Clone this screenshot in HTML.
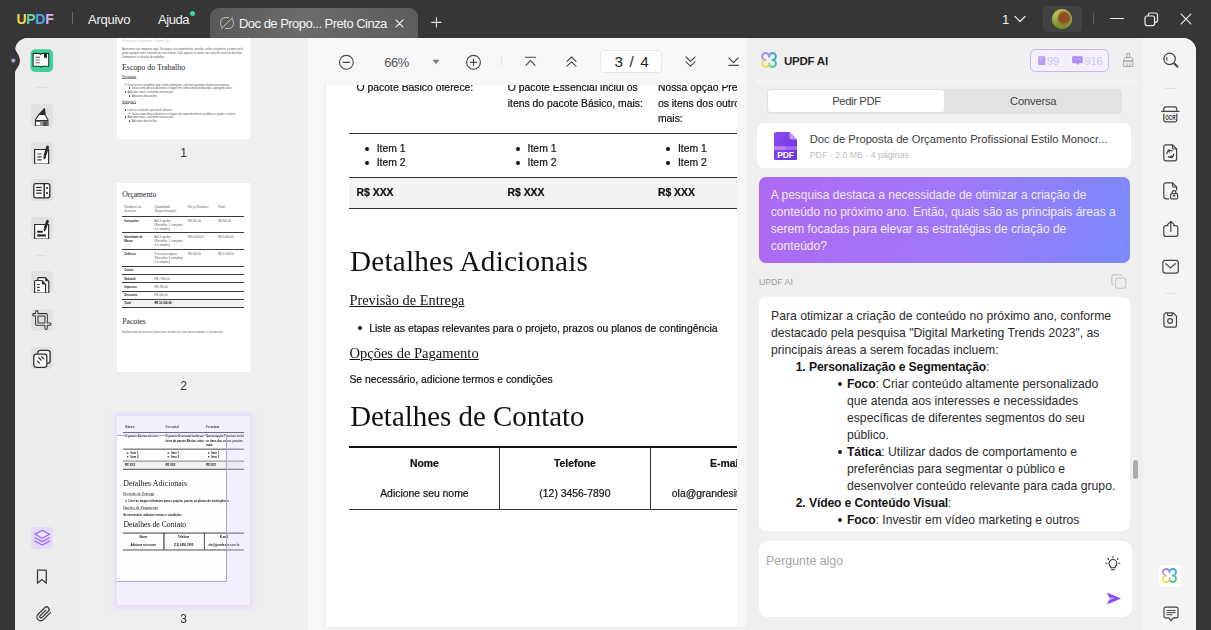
<!DOCTYPE html>
<html lang="pt-BR">
<head>
<meta charset="utf-8">
<title>UPDF</title>
<style>
*{box-sizing:border-box;margin:0;padding:0}
html,body{width:1211px;height:630px;overflow:hidden;background:#373637;font-family:"Liberation Sans",sans-serif;color:#333}
.abs{position:absolute}
#app{position:absolute;left:0;top:0;width:1211px;height:630px;overflow:hidden;background:#373637}
/* title bar */
#titlebar{position:absolute;left:0;top:0;width:1211px;height:38px;color:#fff}
.menu{position:absolute;top:11.700px;font-size:13px;color:#f2f2f2;line-height:16px;white-space:nowrap;letter-spacing:-0.250px}
#tab{position:absolute;left:210px;top:8px;width:208px;height:30px;border-radius:9px 9px 0 0;background:linear-gradient(90deg,#595959 0%,#6b6b6b 45%,#5d5d5d 100%)}
#tab .t{position:absolute;left:29px;top:7.600px;font-size:13px;line-height:16px;color:#f4f4f4;white-space:nowrap;letter-spacing:-0.520px}
/* window panel */
#panel{position:absolute;left:15px;top:38px;width:1181px;height:600px;border-radius:13px 13px 0 0;overflow:hidden;background:#ececed}
#pin{position:absolute;left:1px;top:0;width:1180px;height:600px}
#ltool{position:absolute;left:0;top:0;width:51px;height:600px;background:#ececed}
#thumbs{position:absolute;left:51px;top:0;width:242px;height:600px;background:linear-gradient(90deg,#ececed 0,#efeff0 8px)}
#main{position:absolute;left:293px;top:0;width:438px;height:600px;background:#f7f7f9;overflow:hidden}
#ai{position:absolute;left:731px;top:0;width:396px;height:600px;background:#efeff0}
#rtool{position:absolute;left:1127px;top:0;width:53px;height:600px;background:#f4f4f5}
.ibox{position:absolute;left:15px;width:22px;height:22px;border-radius:4px;background:#e1e1e2}
.ibox svg{position:absolute;left:0;top:0}
.tsep{position:absolute;height:1px;background:#dcdcdd}
/* thumbnails */
.thumb{position:absolute;left:50px;width:133px;background:#fff;overflow:hidden}
.tlabel{position:absolute;left:50px;width:133px;text-align:center;font-size:12px;line-height:14px;color:#333}
/* toolbar */
#tbar{position:absolute;left:0;top:0;width:438px;height:47px;background:#f7f7f9;z-index:5}
/* pdf page */
#page{position:absolute;left:17px;top:-27px;width:411px;height:615.800px;background:#fff;overflow:hidden;will-change:transform}
#pshadow{position:absolute;left:17px;top:-27px;width:440px;height:615.800px;box-shadow:0 0 4px 0 rgba(0,0,0,.10)}

.pg3{position:absolute;left:.4px;top:0;width:494px;height:706px;background:#fff;font-size:10.400px;color:#151515;-webkit-text-stroke:.22px #151515}
.pg3 .h1,.pg3 .h2{-webkit-text-stroke:0}
.pg3 .ln{position:absolute;background:#2f2f2f;height:1px}
.pg3 .t{position:absolute;white-space:nowrap;line-height:12px;margin-top:1.100px}
.pg3 .t.b{font-weight:bold;color:#111}
.pg3 .t.c{text-align:center}
.pg3 .t.sf{font-family:"Liberation Serif",serif;font-size:12.500px;line-height:14px}
.pg3 .bl{position:absolute;width:4.400px;height:4.400px;border-radius:50%;background:#111;margin-top:.4px}
.pg3 .h1{position:absolute;margin-top:-0.600px;font-family:"Liberation Serif",serif;font-size:29.200px;line-height:30px;white-space:nowrap;color:#111}
.pg3 .h2{position:absolute;font-family:"Liberation Serif",serif;font-size:14.400px;line-height:16px;white-space:nowrap;text-decoration:underline;text-decoration-thickness:1px;text-underline-offset:.6px;color:#111}
.t3wrap{position:absolute;left:0;top:0;width:494px;height:706px;transform:scale(0.2682);transform-origin:0 0}
.t3wrap .pg3{background:transparent;left:0}
.t3wrap .ln{min-height:3.700px;min-width:3.700px;background:#262626}
.t3wrap .pg3{-webkit-text-stroke:0}
.t3wrap .t{font-weight:bold}
.t3wrap .bl{transform:scale(1.3)}
.tt{position:absolute;white-space:nowrap;font-size:2.850px;line-height:4px;color:#555}
.tt.b{font-weight:bold;color:#222}
.ts{position:absolute;white-space:nowrap;font-family:"Liberation Serif",serif;color:#222}
.tb{position:absolute;width:1.500px;height:1.500px;background:#333;border-radius:50%}
.tl{position:absolute;left:5.400px;width:121.300px;height:.9px;background:#3a3a3a}
.ans{position:absolute;margin-top:.45px;white-space:nowrap;font-size:12.200px;line-height:17.050px;color:#2b2b2b}
.ans b{color:#161616;letter-spacing:-0.160px}
.bdot{position:absolute;width:4.200px;height:4.200px;border-radius:50%;background:#222}
.ans.bu{font-size:12px}
/* AI */
.card{position:absolute;background:#fff;border-radius:7px}
</style>
</head>
<body>
<svg width="0" height="0" style="position:absolute">
  <defs>
    <filter id="lgb" x="-20%" y="-20%" width="140%" height="140%"><feGaussianBlur stdDeviation="1.600"/></filter>
    <mask id="lgm" maskUnits="userSpaceOnUse" x="0" y="0" width="17" height="17"><path d="M8.500 5.300A3.250 3.250 0 1 0 5.300 8.500 3.250 3.250 0 1 0 8.500 11.700 3.250 3.250 0 1 0 11.700 8.500 3.250 3.250 0 1 0 8.500 5.300z" fill="none" stroke="#fff" stroke-width="1.900" stroke-linejoin="round"/></mask>
    <symbol id="ailogo" viewBox="0 0 17 17">
      <g mask="url(#lgm)"><g filter="url(#lgb)"><rect x="-3" y="-3" width="11.500" height="11.500" fill="#a987f2"/><rect x="8.500" y="-3" width="11.500" height="11.500" fill="#3ea6dc"/><rect x="8.500" y="8.500" width="11.500" height="11.500" fill="#3fc98e"/><rect x="-3" y="8.500" width="11.500" height="11.500" fill="#f1e13c"/></g></g>
    </symbol>
    <linearGradient id="pdfg" x1="0" y1="0" x2="1" y2="1"><stop offset="0" stop-color="#8c4bf0"/><stop offset="1" stop-color="#6a35dd"/></linearGradient>
  </defs>
</svg>
<div id="app">
  <div id="titlebar">
    <div class="abs" style="left:16.5px;top:9px;font-size:14px;line-height:20px;font-weight:bold;letter-spacing:-0.3px;white-space:nowrap"><span style="color:#f3d84a">U</span><span style="color:#5cd6a2">P</span><span style="color:#4ba6e4">D</span><span style="color:#cfaef6">F</span></div>
    <div class="abs" style="left:72px;top:12px;width:1px;height:12px;background:#6a6a6a"></div>
    <div class="menu" style="left:88px">Arquivo</div>
    <div class="menu" style="left:158px;letter-spacing:-0.450px">Ajuda</div>
    <div class="abs" style="left:190px;top:10.500px;width:5px;height:5px;border-radius:50%;background:#3fd6a5"></div>
    <div id="tab">
      <svg class="abs" style="left:9px;top:8px" width="16" height="14" viewBox="0 0 16 14" fill="none" stroke="#c2c2c2" stroke-width="1" stroke-linecap="round"><path d="M9.5 1.6H6.2C3.6 1.6 1.6 3.6 1.6 6.2v1.6c0 1.5.7 2.8 1.7 3.6"/><path d="M6.5 12.4h3.3c2.6 0 4.6-2 4.6-4.6V6.2c0-1.5-.7-2.8-1.7-3.6"/><path d="M2.2 12.6L13.8 1.4"/></svg>
      <div class="t">Doc de Propo... Preto Cinza</div>
      <svg class="abs" style="left:185px;top:10.500px" width="9" height="9" viewBox="0 0 10 10" stroke="#f0f0f0" stroke-width="1.25" stroke-linecap="round"><path d="M1 1l8 8M9 1l-8 8"/></svg>
    </div>
    <svg class="abs" style="left:430.800px;top:16.800px" width="10.800" height="10.800" viewBox="0 0 12 12" stroke="#e8e8e8" stroke-width="1.2" stroke-linecap="round"><path d="M6 .8v10.4M.8 6h10.4"/></svg>
    <div class="menu" style="left:1002px">1</div>
    <svg class="abs" style="left:1014px;top:15px" width="12" height="8" viewBox="0 0 12 8" fill="none" stroke="#e8e8e8" stroke-width="1.2" stroke-linecap="round" stroke-linejoin="round"><path d="M1 1.5l5 5 5-5"/></svg>
    <div class="abs" style="left:1043px;top:6px;width:39px;height:26px;border-radius:4px;background:#424242"></div>
    <div class="abs" style="left:1052px;top:9px;width:20px;height:20px;border-radius:50%;overflow:hidden;background:#9aa845">
      <div class="abs" style="left:0;top:0;width:20px;height:20px;background:radial-gradient(circle at 12px 9px,#8a4a22 0,#8f5227 5px,rgba(143,82,39,0) 7.5px),radial-gradient(circle at 5px 6px,#c2bf5a 0,rgba(190,190,90,0) 7px),linear-gradient(180deg,#b5b255 0,#8fa03c 60%,#6d8a2c 100%)"></div>
    </div>
    <div class="abs" style="left:1093px;top:13px;width:1px;height:11px;background:#5a5a5a"></div>
    <div class="abs" style="left:1110px;top:18px;width:14px;height:1.3px;background:#ececec"></div>
    <svg class="abs" style="left:1144px;top:12px" width="15" height="15" viewBox="0 0 15 15" fill="none" stroke="#ececec" stroke-width="1.2"><rect x="1" y="4" width="9.6" height="9.6" rx="2"/><path d="M4.2 4V3c0-1.100.9-2 2-2h5.300c1.100 0 2 .9 2 2v5.300c0 1.100-.9 2-2 2h-.9"/></svg>
    <svg class="abs" style="left:1179.500px;top:13.300px" width="12" height="12" viewBox="0 0 13 13" stroke="#ececec" stroke-width="1.3" stroke-linecap="round"><path d="M1.300 1.300l10.400 10.400M11.700 1.300L1.300 11.700"/></svg>
  </div>
  <svg class="abs" style="left:0;top:48px;z-index:9" width="24" height="25" viewBox="0 0 24 25"><path d="M15 0C15 3.600 19.900 6.200 19.900 12.500S15 21.400 15 25H0V0z" fill="#373637"/><circle cx="13.300" cy="12.600" r="2.100" fill="#a99cd8"/></svg>
  <div id="panel"><div id="pin">
    <div id="ltool">
      <div class="ibox" style="left:14px;top:11px;width:24px;height:24px;background:none">
        <svg width="24" height="24" viewBox="0 0 24 24"><rect x=".5" y=".3" width="22.600" height="22.600" rx="4.600" fill="#40d09a"/><g transform="translate(-.1 .1)"><path d="M3.200 4.300h5.200c1.200 0 2 .4 2.400 1 .4-.6 1.200-1 2.400-1h5.600v12.800h-5.600c-1.200 0-2 .3-2.400.9-.4-.6-1.200-.9-2.400-.9H3.200z" fill="#fff" stroke="#14392b" stroke-width="1.100" stroke-linejoin="round"/><path d="M14.200 4.500h2.700v4.800l-1.350-1.100-1.350 1.100z" fill="#101010"/><path d="M5.600 8.200h4.400" stroke="#3d3d3d" stroke-width="1.100"/><path d="M5.600 10.900h4.400" stroke="#5f7a6a" stroke-width="1.100"/><path d="M5.600 13.700h4.400" stroke="#8a4a5a" stroke-width="1.100"/></g></svg>
      </div>
      <div class="tsep" style="left:21px;top:49px;width:10px"></div>
      <div class="ibox" style="top:66px">
        <svg width="22" height="22" viewBox="0 0 22 22"><path d="M13.500 4.600L7.600 10.900 4.400 15.800v6.200h12.500v-6.200l-2.700-4.900z" fill="#fff" stroke="#2e2e2e" stroke-width="1.100" stroke-linejoin="round"/><path d="M13.700 4.400L7.400 11h6.900z" fill="#2b2b2b"/><rect x="4.400" y="16" width="12.500" height="1.700" fill="#2e2e2e"/><rect x="9" y="17.700" width="7.400" height="4.300" fill="#9a9a9a"/><rect x="12" y="17.700" width="4.400" height="4.300" fill="#555"/></svg>
      </div>
      <div class="ibox" style="top:104px">
        <svg width="22" height="22" viewBox="0 0 22 22"><path d="M3.600 7.500h14v14.500h-14z" fill="#fff" stroke="#2e2e2e" stroke-width="1.200"/><path d="M6.300 12h4.300M6.300 14.900h4.300M6.300 17.800h4.300" stroke="#3a3a3a" stroke-width="1.200"/><path d="M16.600 5l-2.700 8.500" stroke="#2a2a2a" stroke-width="2.700" stroke-linecap="round"/><path d="M12.300 14.200l3.200 1-2.700 2.600z" fill="#2a2a2a"/></svg>
      </div>
      <div class="ibox" style="top:141px">
        <svg width="22" height="22" viewBox="0 0 22 22"><rect x="2.800" y="4.600" width="16" height="14.200" rx="2" fill="#fff" stroke="#2e2e2e" stroke-width="1.300"/><path d="M13.200 4.600v14.200" stroke="#2e2e2e" stroke-width="1.500"/><path d="M5.200 8.400h5.600M5.200 11.300h5.600M5.200 14.100h5.600" stroke="#333" stroke-width="1.300"/><circle cx="16" cy="9" r="1.050" fill="#333"/><circle cx="16" cy="14.100" r="1.050" fill="#333"/></svg>
      </div>
      <div class="ibox" style="top:179px">
        <svg width="22" height="22" viewBox="0 0 22 22"><path d="M3.600 7.500h14v14.500h-14z" fill="#fff" stroke="#2e2e2e" stroke-width="1.200"/><rect x="6.200" y="13.700" width="5.600" height="2" fill="#222"/><rect x="6.200" y="17.400" width="8.800" height="2.100" fill="#222"/><path d="M16.500 4.200l-2.200 6.300" stroke="#2a2a2a" stroke-width="2.700" stroke-linecap="round"/><path d="M12.600 11.300l3.100 1-2.700 2.500z" fill="#2a2a2a"/></svg>
      </div>
      <div class="tsep" style="left:21px;top:217px;width:9px"></div>
      <div class="ibox" style="top:233px">
        <svg width="22" height="22" viewBox="0 0 22 22"><path d="M6.800 9V7.600c0-.6.400-1 1-1h6.400l3.600 3.700V22h-3" fill="#fff" stroke="#2e2e2e" stroke-width="1.200" stroke-linejoin="round"/><path d="M14.200 6.600v3.700h3.600z" fill="#2a2a2a"/><path d="M3.600 22V10.500c0-.6.400-1 1-1h6.300l3.700 3.800V22z" fill="#fff" stroke="#2e2e2e" stroke-width="1.200" stroke-linejoin="round"/><path d="M10.900 9.500v3.800h3.700z" fill="#2a2a2a"/><path d="M6 13.500h2.700M6 16.400h2.700M6 19.300h2.700" stroke="#333" stroke-width="1.200"/></svg>
      </div>
      <div class="ibox" style="top:271px">
        <svg width="22" height="22" viewBox="0 0 22 22" fill="none" stroke-linecap="round" stroke-linejoin="round"><path d="M2.800 5.800h12.300v13.400" stroke="#333" stroke-width="3.400"/><path d="M5.800 2.800v12.300h13" stroke="#333" stroke-width="3.400"/><path d="M2.800 5.800h12.300v13.400" stroke="#f4f4f4" stroke-width="1.300"/><path d="M5.800 2.800v12.300h13" stroke="#f4f4f4" stroke-width="1.300"/></svg>
      </div>
      <div class="ibox" style="top:308.500px">
        <svg width="22" height="22" viewBox="0 0 22 22"><rect x="6.800" y="3.300" width="12.300" height="13" rx="2.600" fill="#f6f6f6" stroke="#333" stroke-width="1.300"/><rect x="2.800" y="7.100" width="13" height="13.300" rx="2.600" fill="#fff" stroke="#333" stroke-width="1.300"/><path d="M7.600 10.600l2.400 2.400M10.600 9.600l2.300 2.300M6.500 14.100l2 2" stroke="#333" stroke-width="1.300" stroke-linecap="round"/></svg>
      </div>
      <div class="ibox" style="left:14.500px;top:489px;width:22.500px;height:21.500px;background:#e4dafb">
        <svg width="22.5" height="21.500" viewBox="0 0 22.5 21.500" fill="none" stroke="#9a6bf2" stroke-width="1.250" stroke-linejoin="round" stroke-linecap="round"><path d="M11.200 3.400l7.300 3.900-7.300 3.900-7.300-3.900z" fill="#ede4ff"/><path d="M3.900 10.700l7.300 3.900 7.300-3.900"/><path d="M3.900 14.100l7.300 3.900 7.300-3.900"/></svg>
      </div>
      <svg class="abs" style="left:20px;top:530.500px" width="12" height="16" viewBox="0 0 12 16" fill="none" stroke="#3d3d3d" stroke-width="1.300" stroke-linejoin="round"><path d="M1.500 1.200h8.800v13L5.900 10.600 1.500 14.200z"/></svg>
      <svg class="abs" style="left:18.500px;top:567.200px" width="18" height="18" viewBox="0 0 18 18" fill="none" stroke="#3d3d3d" stroke-width="1.300" stroke-linecap="round"><path d="M15.400 7.600l-7 7c-1.500 1.500-3.900 1.500-5.300 0-1.500-1.500-1.500-3.800 0-5.300l6.600-6.600c1-1 2.600-1 3.600 0s1 2.600 0 3.600l-6.300 6.300c-.5.500-1.300.5-1.800 0s-.5-1.300 0-1.800l5.700-5.700"/></svg>
    </div>
    <div id="thumbs">
      <div class="abs" style="right:0;top:0;width:1.500px;height:600px;background:#f7f7f9"></div>
      <div class="thumb" style="top:0;height:100.500px">
        <div class="tt" style="left:5px;top:1px;color:#c4c4c4">Proposta de Orçamento · Grande Site</div>
        <div class="tt" style="left:5px;top:9.100px">Apresente sua empresa aqui. Destaque sua experiência, missão, visão e trajetória e como você</div>
        <div class="tt" style="left:5px;top:12.900px">pode agregar valor e beneficiar seu cliente. Vale apostar e contar um caso de sucesso do leitor.</div>
        <div class="tt" style="left:5px;top:17.100px">Demonstre a solução de trabalho.</div>
        <div class="ts" style="left:5px;top:24.800px;font-size:7.900px;line-height:10px">Escopo do Trabalho</div>
        <div class="ts" style="left:5px;top:37.200px;font-size:3.900px;line-height:5px;text-decoration:underline;text-decoration-thickness:.45px;text-underline-offset:.3px;text-decoration-color:#8a8a8a">Premium</div>
        <div class="tb" style="left:7.500px;top:45.600px"></div><div class="tt" style="left:10.500px;top:44.500px">Descreva os produtos que serão entregues; adicione quantas forem necessárias</div>
        <div class="tb" style="left:11.500px;top:49.400px"></div><div class="tt" style="left:14.700px;top:48.300px">Inclua uma descrição breve e foque em como serão produzidos, agregam valor</div>
        <div class="tb" style="left:7.500px;top:53.300px"></div><div class="tt" style="left:10.500px;top:52.200px">Adicione mais, conforme necessário</div>
        <div class="tb" style="left:11.500px;top:57.100px"></div><div class="tt" style="left:14.700px;top:56px">Adicione descrições</div>
        <div class="ts" style="left:5px;top:62.200px;font-size:3.900px;line-height:5px;text-decoration:underline;text-decoration-thickness:.45px;text-underline-offset:.3px;text-decoration-color:#8a8a8a">Soluções</div>
        <div class="tb" style="left:7.500px;top:71px"></div><div class="tt" style="left:10.500px;top:69.900px">Liste as soluções que você oferece</div>
        <div class="tb" style="left:11.500px;top:74.700px"></div><div class="tt" style="left:14.700px;top:73.600px">Inclua uma descrição breve e foque em como beneficia o público e ajuda o cliente</div>
        <div class="tb" style="left:7.500px;top:78.400px"></div><div class="tt" style="left:10.500px;top:77.300px">Adicione mais, conforme necessário</div>
        <div class="tb" style="left:11.500px;top:82.100px"></div><div class="tt" style="left:14.700px;top:81px">Adicione descrições</div>
      </div>
      <div class="tlabel" style="top:107.500px">1</div>
      <div class="thumb" style="top:145px;height:188.500px">
        <div class="ts" style="left:5.200px;top:7.200px;font-size:7.700px;line-height:10px">Orçamento</div>
        <div class="ts" style="left:7.200px;top:21.700px;font-size:3.500px;line-height:4.400px;color:#555">Produtos ou<br>Serviços</div>
        <div class="ts" style="left:37.500px;top:21.700px;font-size:3.500px;line-height:4.400px;color:#555">Quantidade<br>(Especificação)</div>
        <div class="ts" style="left:71px;top:21.700px;font-size:3.500px;line-height:4.400px;color:#555">Preço Unitário</div>
        <div class="ts" style="left:101px;top:21.700px;font-size:3.500px;line-height:4.400px;color:#555">Total</div>
        <div class="tl" style="top:32.900px"></div>
        <div class="tt b" style="left:7.200px;top:35.700px">Instruções</div><div class="tt" style="left:37.500px;top:35.700px;line-height:4.100px">Até 3 opções<br>(Revisões: 1 completa<br>e 1 simples)</div><div class="tt" style="left:71px;top:35.700px">R$ 300,00</div><div class="tt" style="left:101px;top:35.700px">R$ 300,00</div>
        <div class="tl" style="top:49.400px"></div>
        <div class="tt b" style="left:7.200px;top:52.200px;line-height:4.100px">Identidade de<br>Marca</div><div class="tt" style="left:37.500px;top:52.200px;line-height:4.100px">Até 3 opções<br>(Revisões: 1 completa<br>e 2 simples)</div><div class="tt" style="left:71px;top:52.200px">R$ 6.000,00</div><div class="tt" style="left:101px;top:52.200px">R$ 6.000,00</div>
        <div class="tl" style="top:65.900px"></div>
        <div class="tt b" style="left:7.200px;top:68.600px">Gráficos</div><div class="tt" style="left:37.500px;top:68.600px;line-height:4.100px">3 recursos digitais<br>(Revisões: 1 completa<br>e 1 simples)</div><div class="tt" style="left:71px;top:68.600px">R$ 500,00</div><div class="tt" style="left:101px;top:68.600px">R$ 1.500,00</div>
        <div class="tl" style="top:82.800px"></div>
        <div class="tt b" style="left:7.200px;top:85.100px">Outros</div>
        <div class="tl" style="top:91px"></div>
        <div class="tt b" style="left:7.200px;top:94px">Subtotal</div><div class="tt" style="left:37.500px;top:94px">R$ 7.800,00</div>
        <div class="tl" style="top:99.300px"></div>
        <div class="tt b" style="left:7.200px;top:102.200px">Impostos</div><div class="tt" style="left:37.500px;top:102.200px">R$ 780,00</div>
        <div class="tl" style="top:107.500px"></div>
        <div class="tt b" style="left:7.200px;top:110.200px">Desconto</div><div class="tt" style="left:37.500px;top:110.200px">R$ 500,00</div>
        <div class="abs" style="left:5.400px;top:116.300px;width:121.300px;height:8.300px;background:#f1f1f1"></div>
        <div class="tl" style="top:115.900px"></div>
        <div class="tt b" style="left:7.200px;top:118.400px">Total</div><div class="tt b" style="left:37.500px;top:118.400px;color:#000">R$ 10.100,00</div>
        <div class="tl" style="top:124.200px"></div>
        <div class="ts" style="left:5.200px;top:133.800px;font-size:7.700px;line-height:10px">Pacotes</div>
        <div class="tt" style="left:5.200px;top:146.800px;color:#666">Explore nossos pacotes feitos para atender às suas necessidades e orçamento.</div>
      </div>
      <div class="tlabel" style="top:341px">2</div>
      <div class="abs" style="left:50px;top:378px;width:133px;height:188.500px;background:#e9e1fb;box-shadow:0 0 4px 3px #e5dcf9"></div>
      <div class="thumb" style="top:378px;height:188.500px;background:#fdfcff">
        <div class="t3wrap">
<div class="pg3">
<div class="t sf" style="left:30.500px;top:34px">Básico</div><div class="t sf" style="left:181.300px;top:34px">Essencial</div><div class="t sf" style="left:331.500px;top:34px">Premium</div>
<div class="ln" style="left:22.300px;top:59.500px;width:452.200px;height:2px"></div>
<div class="t" style="left:30.200px;top:70px">O pacote Básico oferece:</div>
<div class="t" style="left:181.300px;top:70px">O pacote Essencial inclui os</div><div class="t" style="left:181.300px;top:85.500px">itens do pacote Básico, mais:</div>
<div class="t" style="left:331.500px;top:70px">Nossa opção Premium inclui</div><div class="t" style="left:331.500px;top:85.500px">os itens dos outros pacotes,</div><div class="t" style="left:331.500px;top:101px">mais:</div>
<div class="ln" style="left:22.300px;top:121.700px;width:452.200px"></div>
<div class="bl" style="left:38.400px;top:135.500px"></div><div class="t" style="left:50.300px;top:131.200px">Item 1</div>
<div class="bl" style="left:38.400px;top:149.500px"></div><div class="t" style="left:50.300px;top:145.200px">Item 2</div>
<div class="bl" style="left:189.200px;top:135.500px"></div><div class="t" style="left:201.200px;top:131.200px">Item 1</div>
<div class="bl" style="left:189.200px;top:149.500px"></div><div class="t" style="left:201.200px;top:145.200px">Item 2</div>
<div class="bl" style="left:339.700px;top:135.500px"></div><div class="t" style="left:351.500px;top:131.200px">Item 1</div>
<div class="bl" style="left:339.700px;top:149.500px"></div><div class="t" style="left:351.500px;top:145.200px">Item 2</div>
<div class="abs" style="left:23px;top:166.200px;width:452.200px;height:31px;background:#f2f2f2"></div>
<div class="ln" style="left:22.300px;top:165.700px;width:452.200px"></div>
<div class="t b" style="left:30.200px;top:174.500px">R$ XXX</div><div class="t b" style="left:181.100px;top:174.500px">R$ XXX</div><div class="t b" style="left:331.500px;top:174.500px">R$ XXX</div>
<div class="ln" style="left:22.300px;top:196.800px;width:452.200px"></div>
<div class="h1" style="left:23.600px;top:235.700px;letter-spacing:0.2px">Detalhes Adicionais</div>
<div class="h2" style="left:23px;top:280.800px">Previsão de Entrega</div>
<div class="bl" style="left:31.600px;top:314.300px;width:4.200px;height:4.200px"></div><div class="t" style="left:42.800px;top:310.600px">Liste as etapas relevantes para o projeto, prazos ou planos de contingência</div>
<div class="h2" style="left:23px;top:334.100px;font-size:14.550px">Opções de Pagamento</div>
<div class="t" style="left:23px;top:362.400px">Se necessário, adicione termos e condições</div>
<div class="h1" style="left:23.800px;top:390.800px;font-size:28.900px">Detalhes de Contato</div>
<div class="ln" style="left:22.300px;top:434.700px;width:452.200px;height:2px;background:#111"></div>
<div class="ln" style="left:173px;top:436px;width:1px;height:62px"></div><div class="ln" style="left:323.500px;top:436px;width:1px;height:62px"></div>
<div class="t b c" style="left:23px;width:150px;top:445.900px">Nome</div><div class="t b c" style="left:173.500px;width:150px;top:445.900px">Telefone</div><div class="t b c" style="left:324px;width:150.500px;top:445.900px">E-mail</div>
<div class="t c" style="left:23px;width:150px;top:476.200px">Adicione seu nome</div><div class="t c" style="left:173.500px;width:150px;top:476.200px">(12) 3456-7890</div><div class="t c" style="left:324px;width:150.500px;top:476.200px">ola@grandesite.com.br</div>
<div class="ln" style="left:22.300px;top:497.500px;width:452.200px"></div>
</div>
        </div>
        <div class="abs" style="left:0;top:0;width:133px;height:19.500px;background:rgba(217,200,251,.24)"></div>
        <div class="abs" style="left:109.300px;top:19.500px;width:24px;height:146px;background:rgba(217,200,251,.24)"></div>
        <div class="abs" style="left:0;top:165.500px;width:133px;height:23.500px;background:rgba(217,200,251,.24)"></div>
        <div class="abs" style="left:-1px;top:19px;width:110.800px;height:147px;border:1px solid #afa3e4"></div>
      </div>
      <div class="tlabel" style="top:573.500px">3</div>
    </div>
    <div id="main">
      <div id="pshadow"></div><div id="page"><div class="pg3">
<div class="t sf" style="left:30.500px;top:34px">Básico</div><div class="t sf" style="left:181.300px;top:34px">Essencial</div><div class="t sf" style="left:331.500px;top:34px">Premium</div>
<div class="ln" style="left:22.300px;top:59.500px;width:452.200px;height:2px"></div>
<div class="t" style="left:30.200px;top:70px">O pacote Básico oferece:</div>
<div class="t" style="left:181.300px;top:70px">O pacote Essencial inclui os</div><div class="t" style="left:181.300px;top:85.500px">itens do pacote Básico, mais:</div>
<div class="t" style="left:331.500px;top:70px">Nossa opção Premium inclui</div><div class="t" style="left:331.500px;top:85.500px">os itens dos outros pacotes,</div><div class="t" style="left:331.500px;top:101px">mais:</div>
<div class="ln" style="left:22.300px;top:121.700px;width:452.200px"></div>
<div class="bl" style="left:38.400px;top:135.500px"></div><div class="t" style="left:50.300px;top:131.200px">Item 1</div>
<div class="bl" style="left:38.400px;top:149.500px"></div><div class="t" style="left:50.300px;top:145.200px">Item 2</div>
<div class="bl" style="left:189.200px;top:135.500px"></div><div class="t" style="left:201.200px;top:131.200px">Item 1</div>
<div class="bl" style="left:189.200px;top:149.500px"></div><div class="t" style="left:201.200px;top:145.200px">Item 2</div>
<div class="bl" style="left:339.700px;top:135.500px"></div><div class="t" style="left:351.500px;top:131.200px">Item 1</div>
<div class="bl" style="left:339.700px;top:149.500px"></div><div class="t" style="left:351.500px;top:145.200px">Item 2</div>
<div class="abs" style="left:23px;top:166.200px;width:452.200px;height:31px;background:#f2f2f2"></div>
<div class="ln" style="left:22.300px;top:165.700px;width:452.200px"></div>
<div class="t b" style="left:30.200px;top:174.500px">R$ XXX</div><div class="t b" style="left:181.100px;top:174.500px">R$ XXX</div><div class="t b" style="left:331.500px;top:174.500px">R$ XXX</div>
<div class="ln" style="left:22.300px;top:196.800px;width:452.200px"></div>
<div class="h1" style="left:23.600px;top:235.700px;letter-spacing:0.2px">Detalhes Adicionais</div>
<div class="h2" style="left:23px;top:280.800px">Previsão de Entrega</div>
<div class="bl" style="left:31.600px;top:314.300px;width:4.200px;height:4.200px"></div><div class="t" style="left:42.800px;top:310.600px">Liste as etapas relevantes para o projeto, prazos ou planos de contingência</div>
<div class="h2" style="left:23px;top:334.100px;font-size:14.550px">Opções de Pagamento</div>
<div class="t" style="left:23px;top:362.400px">Se necessário, adicione termos e condições</div>
<div class="h1" style="left:23.800px;top:390.800px;font-size:28.900px">Detalhes de Contato</div>
<div class="ln" style="left:22.300px;top:434.700px;width:452.200px;height:2px;background:#111"></div>
<div class="ln" style="left:173px;top:436px;width:1px;height:62px"></div><div class="ln" style="left:323.500px;top:436px;width:1px;height:62px"></div>
<div class="t b c" style="left:23px;width:150px;top:445.900px">Nome</div><div class="t b c" style="left:173.500px;width:150px;top:445.900px">Telefone</div><div class="t b c" style="left:324px;width:150.500px;top:445.900px">E-mail</div>
<div class="t c" style="left:23px;width:150px;top:476.200px">Adicione seu nome</div><div class="t c" style="left:173.500px;width:150px;top:476.200px">(12) 3456-7890</div><div class="t c" style="left:324px;width:150.500px;top:476.200px">ola@grandesite.com.br</div>
<div class="ln" style="left:22.300px;top:497.500px;width:452.200px"></div>
</div>
</div>
      <div id="tbar">
        <svg class="abs" style="left:29px;top:16px" width="17" height="17" viewBox="0 0 17 17" fill="none" stroke="#4a4a4a" stroke-width="1.150" stroke-linecap="round"><circle cx="8.400" cy="8.300" r="6.900"/><path d="M5.200 8.300h6.400"/></svg>
        <div class="abs" style="left:75.300px;top:16.500px;font-size:13px;line-height:15px;letter-spacing:-0.550px;color:#555;white-space:nowrap">66%</div>
        <svg class="abs" style="left:122.500px;top:21px" width="8" height="6" viewBox="0 0 8 6"><path d="M.6.700h6.800L4 5.300z" fill="#7a7a7a"/></svg>
        <svg class="abs" style="left:155.500px;top:15.500px" width="17" height="17" viewBox="0 0 17 17" fill="none" stroke="#4a4a4a" stroke-width="1.150" stroke-linecap="round"><circle cx="8.500" cy="8.300" r="6.900"/><path d="M5.300 8.300h6.400M8.500 5.100v6.400"/></svg>
        <div class="abs" style="left:192px;top:18px;width:1px;height:10px;background:#e4e4e6"></div>
        <svg class="abs" style="left:215px;top:17px" width="13" height="13" viewBox="0 0 13 13" fill="none" stroke="#4a4a4a" stroke-width="1.150" stroke-linecap="round" stroke-linejoin="round"><path d="M1.400 2.200h10.200"/><path d="M2 10.400l4.500-4.700 4.500 4.700"/></svg>
        <svg class="abs" style="left:256px;top:17px" width="13" height="13" viewBox="0 0 13 13" fill="none" stroke="#4a4a4a" stroke-width="1.150" stroke-linecap="round" stroke-linejoin="round"><path d="M2 6.400l4.500-4.400 4.500 4.400"/><path d="M2 11.200l4.500-4.400 4.500 4.400"/></svg>
        <div class="abs" style="left:291.200px;top:12.200px;width:62px;height:23px;border:1px solid #e6e6e8;border-radius:4px;background:#fff"></div>
        <div class="abs" style="left:305.500px;top:15px;font-size:15.300px;line-height:17px;color:#1e1e1e;white-space:nowrap;word-spacing:2.200px">3 / 4</div>
        <svg class="abs" style="left:375px;top:17px" width="13" height="13" viewBox="0 0 13 13" fill="none" stroke="#4a4a4a" stroke-width="1.150" stroke-linecap="round" stroke-linejoin="round"><path d="M2 2l4.500 4.400L11 2"/><path d="M2 6.800l4.500 4.400L11 6.800"/></svg>
        <svg class="abs" style="left:417.500px;top:17px" width="13" height="13" viewBox="0 0 13 13" fill="none" stroke="#4a4a4a" stroke-width="1.150" stroke-linecap="round" stroke-linejoin="round"><path d="M2 3l4.500 4.600L11 3"/><path d="M1.800 10.300h9.600"/></svg>
      </div>
    </div>
    <div id="ai">
      <svg class="abs" style="left:12.600px;top:13.300px" width="18" height="18" viewBox="0 0 17 17"><use href="#ailogo"/></svg>
      <div class="abs" style="left:37px;top:16px;font-size:11.500px;line-height:14px;font-weight:bold;letter-spacing:-0.250px;color:#1f1f1f;white-space:nowrap">UPDF AI</div>
      <div class="abs" style="left:283px;top:11.200px;width:79px;height:22.600px;border:1px solid #c6b5f4;border-radius:5.500px;background:#f4f0fe"></div>
      <svg class="abs" style="left:290.500px;top:17.700px" width="8" height="9.500" viewBox="0 0 8 9.500"><rect x=".2" y=".2" width="7.200" height="9" rx=".8" fill="#b79df3"/><path d="M2 2.600h2.200M2 4.400h1.200" stroke="#ddd0fa" stroke-width=".8"/></svg>
      <div class="abs" style="left:300px;top:16px;font-size:11.200px;line-height:14px;color:#cfc5ee;white-space:nowrap;letter-spacing:-0.200px">99</div>
      <div class="abs" style="left:318px;top:18px;width:1px;height:9px;background:#ece6fb"></div>
      <svg class="abs" style="left:324.500px;top:17.800px" width="11" height="10" viewBox="0 0 11 10"><path d="M.9.200h9.200c.4 0 .7.300.7.700v5.700c0 .4-.3.700-.7.700H7.200L5.800 8.900 4.400 7.300H.9c-.4 0-.7-.3-.7-.7V.9c0-.4.300-.7.700-.7z" fill="#ab8df2"/><path d="M2.600 3.200h1.200M4.900 3.200h1.200M7.200 3.200h1.200" stroke="#e6dcfc" stroke-width="1"/></svg>
      <div class="abs" style="left:337.500px;top:16px;font-size:11.200px;line-height:14px;color:#cfc5ee;white-space:nowrap;letter-spacing:-0.200px">916</div>
      <svg class="abs" style="left:375px;top:14px" width="13" height="16" viewBox="0 0 13 16" fill="none" stroke="#a6a6a6" stroke-width="1" stroke-linejoin="round" stroke-linecap="round"><path d="M5.200 1.300h2.400v4.300H5.200z"/><path d="M3.400 5.600h6c.8 0 1.400.6 1.400 1.400v2H2V7c0-.8.600-1.400 1.400-1.400z"/><path d="M2 9h8.800v5.400H2z"/><path d="M5 14.400v-2.800M7.900 14.400v-2.800"/></svg>
      <div class="abs" style="left:8px;top:42px;width:382px;height:4px;background:#f3f3f4"></div>
      <div class="abs" style="left:19.800px;top:50.500px;width:355.200px;height:25.500px;border-radius:4px;background:#e3e3e4"></div>
      <div class="abs" style="left:21.400px;top:52.200px;width:176.100px;height:22px;border-radius:3px;background:#fff"></div>
      <div class="abs" style="left:21.400px;top:56px;width:176.100px;text-align:center;font-size:11.200px;line-height:14px;letter-spacing:-0.350px;color:#444;white-space:nowrap">Pedir PDF</div>
      <div class="abs" style="left:197.500px;top:56px;width:177.500px;text-align:center;font-size:11.200px;line-height:14px;letter-spacing:-0.200px;color:#444;white-space:nowrap">Conversa</div>
      <div class="card" style="left:10px;top:85px;width:374px;height:44.500px"></div>
      <svg class="abs" style="left:26.700px;top:93.700px" width="23" height="28.500" viewBox="0 0 23 28.500"><path d="M2 0h13.500L23 7.500V26.500c0 1.100-.9 2-2 2H2c-1.100 0-2-.9-2-2V2C0 .9.900 0 2 0z" fill="url(#pdfg)"/><path d="M15.500 0L23 7.500h-5.500c-1.100 0-2-.9-2-2z" fill="#b99af8"/><rect x="0" y="14.300" width="23" height="3.600" fill="#a46cf5"/><rect x="0" y="14.300" width="11" height="3.600" fill="#c486f0" opacity=".8"/><text x="11.500" y="26.200" text-anchor="middle" font-family="Liberation Sans, sans-serif" font-size="8.600" font-weight="bold" fill="#fff" letter-spacing="-0.300">PDF</text></svg>
      <div class="abs" style="left:62.700px;top:93.600px;width:300px;font-size:11.200px;line-height:14px;color:#3a3a3a;white-space:nowrap">Doc de Proposta de Orçamento Profissional Estilo Monocr...</div>
      <div class="abs" style="left:62.700px;top:111.300px;font-size:8.800px;line-height:12px;color:#bcbcbc;white-space:nowrap">PDF · 2.0 MB · 4 páginas</div>
      <div class="abs" style="left:12px;top:138.500px;width:371px;height:86px;border-radius:7px;background:linear-gradient(97deg,#ad69f3 0%,#a077f8 50%,#7c8bfd 100%)"></div>
      <div class="abs" style="left:23.800px;top:149px;font-size:12px;line-height:17px;color:#f1eafe;white-space:nowrap">A pesquisa destaca a necessidade de otimizar a criação de<br>conteúdo no próximo ano. Então, quais são as principais áreas a<br>serem focadas para elevar as estratégias de criação de<br>conteúdo?</div>
      <div class="abs" style="left:12px;top:238px;font-size:8.700px;line-height:12px;color:#9a9a9a;white-space:nowrap">UPDF AI</div>
      <svg class="abs" style="left:363.500px;top:236px" width="16" height="15" viewBox="0 0 16 15" fill="none" stroke="#c6c6c8" stroke-width="1.100"><rect x="4.600" y="4" width="10.200" height="10.200" rx="2.200"/><path d="M11.200 2.300c-.3-.9-1.100-1.500-2.100-1.500H3c-1.200 0-2.200 1-2.200 2.200v6.100c0 1 .6 1.800 1.500 2.100"/></svg>
      <div class="card" style="left:12px;top:259px;width:371px;height:233.700px;overflow:hidden">
        <div class="ans" style="left:12px;top:10.150px">Para otimizar a criação de conteúdo no próximo ano, conforme<br>destacado pela pesquisa "Digital Marketing Trends 2023", as<br>principais áreas a serem focadas incluem:</div>
        <div class="ans" style="left:36.700px;top:61.300px"><b>1.</b></div><div class="ans" style="left:50px;top:61.300px"><b>Personalização e Segmentação</b>:</div>
        <div class="bdot" style="left:78.800px;top:84.650px"></div><div class="ans" style="left:88px;top:78.350px"><b>Foco</b>: Criar conteúdo altamente personalizado<br>que atenda aos interesses e necessidades<br>específicas de diferentes segmentos do seu<br>público.</div>
        <div class="bdot" style="left:78.800px;top:152.850px"></div><div class="ans" style="left:88px;top:146.550px"><b>Tática</b>: Utilizar dados de comportamento e<br>preferências para segmentar o público e<br>desenvolver conteúdo relevante para cada grupo.</div>
        <div class="ans" style="left:36.700px;top:197.700px"><b>2.</b></div><div class="ans" style="left:50px;top:197.700px"><b>Vídeo e Conteúdo Visual</b>:</div>
        <div class="bdot" style="left:78.800px;top:221.050px"></div><div class="ans" style="left:88px;top:214.750px"><b>Foco</b>: Investir em vídeo marketing e outros<br>formatos visuais para aumentar o engajamento</div>
      </div>
      <div class="abs" style="left:386px;top:422px;width:5.300px;height:19px;border-radius:2.600px;background:#adadaf"></div>
      <div class="card" style="left:12px;top:503px;width:373px;height:76px;border-radius:9px"></div>
      <div class="abs" style="left:19px;top:516.200px;font-size:12.400px;line-height:15px;color:#a6a6a6;white-space:nowrap">Pergunte algo</div>
      <svg class="abs" style="left:357px;top:517px" width="18" height="18" viewBox="0 0 18 18" fill="none" stroke="#333" stroke-width="1.100" stroke-linecap="round"><path d="M6.700 11.600c-1-.7-1.700-1.900-1.700-3.200 0-2.200 1.800-3.900 3.900-3.900s3.900 1.700 3.900 3.900c0 1.300-.7 2.500-1.700 3.200v1.200H6.700z" stroke-linejoin="round"/><path d="M7.300 14.700h3.200"/><path d="M8.900 1.500v1.200M3.800 3.500l.8.800M14 3.500l-.8.800M1.900 8.300h1.200M14.700 8.300h1.200"/></svg>
      <svg class="abs" style="left:358.500px;top:554px" width="16" height="13" viewBox="0 0 16 13"><path d="M.8.600l14.400 5.900L.8 12.400l2.600-4.900 5.600-1-5.600-1z" fill="#8a4df6"/><path d="M.8.600l2.600 4.900 5.600 1H3.400z" fill="#a872fa"/></svg>
    </div>
    <div id="rtool">
      <svg class="abs" style="left:18px;top:13px" width="20" height="20" viewBox="0 0 20 20" fill="none" stroke="#444" stroke-linecap="round"><circle cx="8.600" cy="7.900" r="5.700" stroke-width="1.200"/><path d="M13.400 12.700l3 2.800" stroke-width="2.200"/><path d="M5.800 6.600v2.600" stroke-width="1.100"/></svg>
      <div class="tsep" style="left:22px;top:49.500px;width:11px;background:#e2e2e3"></div>
      <svg class="abs" style="left:17px;top:66px" width="22" height="22" viewBox="0 0 22 22" fill="none" stroke="#444" stroke-width="1.200" stroke-linecap="round" stroke-linejoin="round"><path d="M1.600 7.400h17.400"/><path d="M3.800 7.400V5c0-1.200.9-2.100 2.100-2.100h8.800c1.200 0 2.100.9 2.100 2.100v2.400"/><path d="M3.800 10.200v5.600c0 1.200.9 2.100 2.100 2.100h8.800c1.200 0 2.100-.9 2.100-2.100v-5.600"/><text x="5.300" y="16.100" font-family="Liberation Sans, sans-serif" font-size="6.600" font-weight="bold" fill="#333" stroke="none" textLength="10.200" lengthAdjust="spacingAndGlyphs">OCR</text></svg>
      <svg class="abs" style="left:18px;top:104px" width="20" height="22" viewBox="0 0 20 22" fill="none" stroke="#444" stroke-width="1.200" stroke-linecap="round" stroke-linejoin="round"><path d="M4.800 2.800h6.800l4 4.200v9.800c0 1.100-.9 2-2 2H4.800c-1.100 0-2-.9-2-2v-12c0-1.100.9-2 2-2z"/><path d="M11.600 3v3c0 .6.400 1 1 1h2.800"/><path d="M5.900 11.600c.1-1.900 1.600-3.300 3.400-3.300.7 0 1.400.2 1.900.6"/><path d="M12.700 12c-.1 1.900-1.600 3.300-3.400 3.300-.7 0-1.400-.2-1.900-.6"/><path d="M7.300 8l1.900.4-.7 1.600z" fill="#444" stroke-width=".8"/><path d="M11.300 15.600l-1.900-.4.700-1.600z" fill="#444" stroke-width=".8"/></svg>
      <svg class="abs" style="left:18px;top:142px" width="20" height="22" viewBox="0 0 20 22" fill="none" stroke="#444" stroke-width="1.200" stroke-linecap="round" stroke-linejoin="round"><path d="M7.600 18.800H4.800c-1.100 0-2-.9-2-2v-12c0-1.100.9-2 2-2h6.800l4 4.200v3"/><path d="M11.600 3v3c0 .6.400 1 1 1h2.800"/><rect x="9.600" y="13.600" width="7" height="5.200" rx="1.100"/><path d="M11.300 13.500v-1c0-1 .8-1.800 1.800-1.800s1.800.8 1.800 1.800v1"/><path d="M12.400 15.700h1.400" stroke-width="1.400"/></svg>
      <svg class="abs" style="left:18px;top:180px" width="20" height="22" viewBox="0 0 20 22" fill="none" stroke="#444" stroke-width="1.200" stroke-linecap="round" stroke-linejoin="round"><path d="M7 7.600H4.800c-1.100 0-2 .9-2 2v6.800c0 1.100.9 2 2 2h10c1.100 0 2-.9 2-2V9.600c0-1.100-.9-2-2-2h-2.200"/><path d="M9.800 13.400V3.600"/><path d="M6.500 6.600l3.300-3.300 3.300 3.300"/></svg>
      <svg class="abs" style="left:18px;top:220px" width="20" height="18" viewBox="0 0 20 18" fill="none" stroke="#444" stroke-width="1.200" stroke-linecap="round" stroke-linejoin="round"><rect x="1.900" y="2.400" width="15.400" height="12.800" rx="2.400"/><path d="M4.800 5.700l4.700 4.200 4.800-4.200"/></svg>
      <div class="tsep" style="left:21.5px;top:254.500px;width:12px;background:#e2e2e3"></div>
      <svg class="abs" style="left:18px;top:272px" width="20" height="20" viewBox="0 0 20 20" fill="none" stroke="#444" stroke-width="1.200" stroke-linecap="round" stroke-linejoin="round"><path d="M5.100 2.900h7.100l3.300 3.300v8.700c0 1.200-1 2.200-2.200 2.200H5.100c-1.200 0-2.200-1-2.200-2.200V5.100c0-1.200 1-2.200 2.200-2.200z"/><path d="M6.600 3.100v1.500c0 .6.400 1 1 1h2.700c.6 0 1-.4 1-1V3.100"/><circle cx="9.100" cy="11" r="2.400"/></svg>
      <div class="abs" style="left:16px;top:527px;width:21.500px;height:21.500px;border-radius:4px;background:#fff"></div>
      <svg class="abs" style="left:18.2px;top:529.200px" width="17" height="17" viewBox="0 0 17 17"><use href="#ailogo"/></svg>
      <svg class="abs" style="left:18.5px;top:566.500px" width="18" height="18" viewBox="0 0 18 18" fill="none" stroke="#444" stroke-width="1.200" stroke-linecap="round" stroke-linejoin="round"><path d="M3.600 2.200h10.800c.9 0 1.600.7 1.600 1.600v7.400c0 .9-.7 1.600-1.600 1.600h-3.200L9 15.600l-2.200-2.800H3.600c-.9 0-1.600-.7-1.600-1.600V3.800c0-.9.700-1.600 1.600-1.600z"/><path d="M4.900 5.500h8.200M4.900 7.600h8.200M4.900 9.700h5.200" stroke-width="1"/></svg>
    </div>
  </div></div>
</div>
</body>
</html>
